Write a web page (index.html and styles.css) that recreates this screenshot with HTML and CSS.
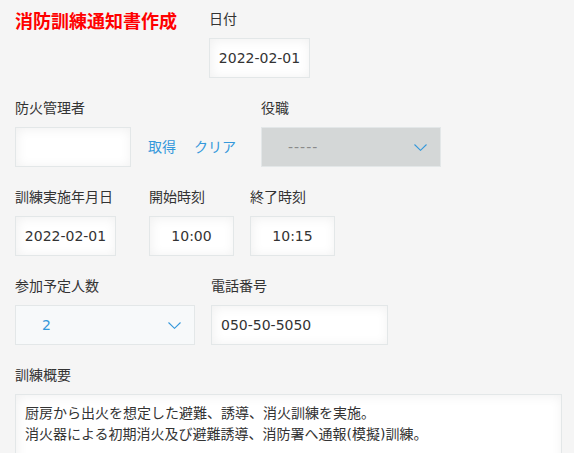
FILE: index.html
```html
<!DOCTYPE html>
<html lang="ja">
<head>
<meta charset="utf-8">
<title>消防訓練通知書作成</title>
<link rel="stylesheet" href="styles.css">
</head>
<body>
<div class="form">
  <div class="row">
    <div class="field f-title"><div class="title">消防訓練通知書作成</div></div>
    <div class="field">
      <div class="label">日付</div>
      <div class="box w-date center">2022-02-01</div>
    </div>
  </div>

  <div class="row">
    <div class="field f-user">
      <div class="label">防火管理者</div>
      <div class="user">
        <div class="box w-user"></div>
        <span class="link link-get">取得</span>
        <span class="link link-clear">クリア</span>
      </div>
    </div>
    <div class="field">
      <div class="label">役職</div>
      <div class="select disabled w-sel">
        <span class="sel-text dash">-----</span>
        <svg class="chev" width="13" height="7" viewBox="0 0 13 7"><path d="M0.5 0.5 L6.5 6.3 L12.5 0.5" fill="none" stroke="#3498db" stroke-width="1.1"/></svg>
      </div>
    </div>
  </div>

  <div class="row">
    <div class="field f-date2">
      <div class="label">訓練実施年月日</div>
      <div class="box w-date center">2022-02-01</div>
    </div>
    <div class="field f-start">
      <div class="label">開始時刻</div>
      <div class="box w-time center">10:00</div>
    </div>
    <div class="field">
      <div class="label">終了時刻</div>
      <div class="box w-time center">10:15</div>
    </div>
  </div>

  <div class="row">
    <div class="field f-count">
      <div class="label">参加予定人数</div>
      <div class="select light w-sel">
        <span class="sel-text blue">2</span>
        <svg class="chev" width="13" height="7" viewBox="0 0 13 7"><path d="M0.5 0.5 L6.5 6.3 L12.5 0.5" fill="none" stroke="#3498db" stroke-width="1.1"/></svg>
      </div>
    </div>
    <div class="field">
      <div class="label">電話番号</div>
      <div class="box w-phone">050-50-5050</div>
    </div>
  </div>

  <div class="row">
    <div class="field">
      <div class="label">訓練概要</div>
      <div class="textarea">厨房から出火を想定した避難、誘導、消火訓練を実施。
消火器による初期消火及び避難誘導、消防署へ通報(模擬)訓練。</div>
    </div>
  </div>
</div>
</body>
</html>
```

FILE: styles.css
```css
html, body {
  margin: 0;
  padding: 0;
  overflow: hidden;
  background: #f5f5f5;
}
body {
  font-family: "DejaVu Sans", "Noto Sans CJK JP", sans-serif;
  font-size: 14px;
  color: #333;
}
.form {
  padding: 8px 0 0 15px;
}
.row {
  display: flex;
  align-items: flex-start;
  margin-bottom: 19px;
}
.label {
  line-height: 22px;
  height: 22px;
  margin-bottom: 8px;
  white-space: nowrap;
}
.title {
  font-family: "Noto Sans CJK JP", sans-serif;
  font-weight: bold;
  font-size: 18px;
  line-height: 25px;
  color: #ff0000;
  white-space: nowrap;
}
.f-title { width: 194px; }
.f-user { width: 246px; }
.f-date2 { width: 134px; }
.f-start { width: 101px; }
.f-count { width: 196px; }

.box {
  box-sizing: border-box;
  height: 40px;
  border: 1px solid #e3e7e8;
  background: #fff;
  box-shadow: 1px 1px 12px #f0f0f0 inset;
  line-height: 38px;
  padding: 0 9px;
  white-space: nowrap;
}
.center { text-align: center; padding: 0; }
.w-date { width: 101px; }
.w-time { width: 85px; }
.w-user { width: 116px; }
.w-phone { width: 177px; }

.user {
  display: flex;
  align-items: center;
}
.link {
  color: #3498db;
  line-height: 40px;
}
.link-get { margin-left: 17px; }
.link-clear { margin-left: 18px; }

.select {
  box-sizing: border-box;
  height: 40px;
  border: 1px solid #e3e7e8;
  display: flex;
  align-items: center;
  justify-content: space-between;
  padding: 0 13px 0 26px;
}
.w-sel { width: 180px; }
.disabled { background: #d4d7d7; }
.light { background: #f7f9fa; }
.sel-text { line-height: 38px; }
.dash { color: #8a8a8a; letter-spacing: 1px; }
.blue { color: #3498db; }
.chev { display: block; }

.textarea {
  box-sizing: border-box;
  width: 547px;
  height: 100px;
  border: 1px solid #e3e7e8;
  background: #fff;
  box-shadow: 1px 1px 12px #f0f0f0 inset;
  padding: 8px 9px;
  line-height: 21px;
  white-space: pre-wrap;
}
```
